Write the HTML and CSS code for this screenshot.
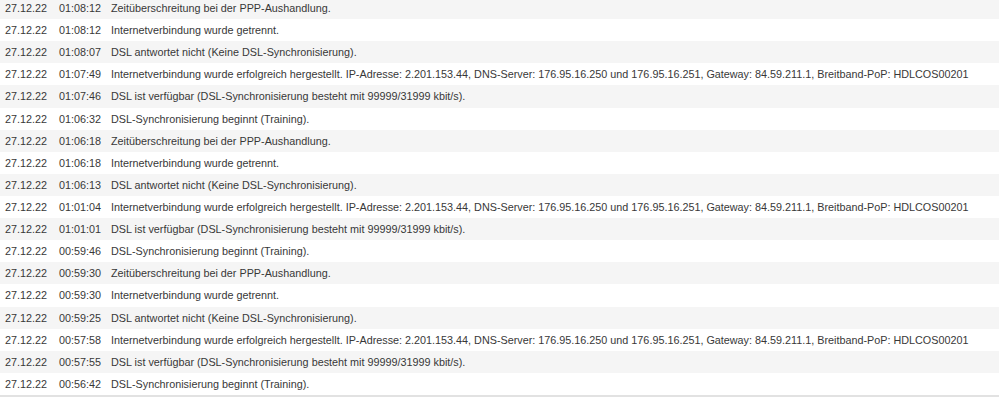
FILE: index.html
```html
<!DOCTYPE html>
<html>
<head>
<meta charset="utf-8">
<link rel="stylesheet" href="styles.css">
</head>
<body>
<div class="log">
  <div class="row"><span class="d">27.12.22</span><span class="t">01:08:12</span><span class="m">Zeitüberschreitung bei der PPP-Aushandlung.</span></div>
  <div class="row"><span class="d">27.12.22</span><span class="t">01:08:12</span><span class="m">Internetverbindung wurde getrennt.</span></div>
  <div class="row"><span class="d">27.12.22</span><span class="t">01:08:07</span><span class="m">DSL antwortet nicht (Keine DSL-Synchronisierung).</span></div>
  <div class="row"><span class="d">27.12.22</span><span class="t">01:07:49</span><span class="m">Internetverbindung wurde erfolgreich hergestellt. IP-Adresse: 2.201.153.44, DNS-Server: 176.95.16.250 und 176.95.16.251, Gateway: 84.59.211.1, Breitband-PoP: HDLCOS00201</span></div>
  <div class="row"><span class="d">27.12.22</span><span class="t">01:07:46</span><span class="m">DSL ist verfügbar (DSL-Synchronisierung besteht mit 99999/31999 kbit/s).</span></div>
  <div class="row"><span class="d">27.12.22</span><span class="t">01:06:32</span><span class="m">DSL-Synchronisierung beginnt (Training).</span></div>
  <div class="row"><span class="d">27.12.22</span><span class="t">01:06:18</span><span class="m">Zeitüberschreitung bei der PPP-Aushandlung.</span></div>
  <div class="row"><span class="d">27.12.22</span><span class="t">01:06:18</span><span class="m">Internetverbindung wurde getrennt.</span></div>
  <div class="row"><span class="d">27.12.22</span><span class="t">01:06:13</span><span class="m">DSL antwortet nicht (Keine DSL-Synchronisierung).</span></div>
  <div class="row"><span class="d">27.12.22</span><span class="t">01:01:04</span><span class="m">Internetverbindung wurde erfolgreich hergestellt. IP-Adresse: 2.201.153.44, DNS-Server: 176.95.16.250 und 176.95.16.251, Gateway: 84.59.211.1, Breitband-PoP: HDLCOS00201</span></div>
  <div class="row"><span class="d">27.12.22</span><span class="t">01:01:01</span><span class="m">DSL ist verfügbar (DSL-Synchronisierung besteht mit 99999/31999 kbit/s).</span></div>
  <div class="row"><span class="d">27.12.22</span><span class="t">00:59:46</span><span class="m">DSL-Synchronisierung beginnt (Training).</span></div>
  <div class="row"><span class="d">27.12.22</span><span class="t">00:59:30</span><span class="m">Zeitüberschreitung bei der PPP-Aushandlung.</span></div>
  <div class="row"><span class="d">27.12.22</span><span class="t">00:59:30</span><span class="m">Internetverbindung wurde getrennt.</span></div>
  <div class="row"><span class="d">27.12.22</span><span class="t">00:59:25</span><span class="m">DSL antwortet nicht (Keine DSL-Synchronisierung).</span></div>
  <div class="row"><span class="d">27.12.22</span><span class="t">00:57:58</span><span class="m">Internetverbindung wurde erfolgreich hergestellt. IP-Adresse: 2.201.153.44, DNS-Server: 176.95.16.250 und 176.95.16.251, Gateway: 84.59.211.1, Breitband-PoP: HDLCOS00201</span></div>
  <div class="row"><span class="d">27.12.22</span><span class="t">00:57:55</span><span class="m">DSL ist verfügbar (DSL-Synchronisierung besteht mit 99999/31999 kbit/s).</span></div>
  <div class="row"><span class="d">27.12.22</span><span class="t">00:56:42</span><span class="m">DSL-Synchronisierung beginnt (Training).</span></div>
</div>
</body>
</html>
```
FILE: styles.css
```css
html, body {
  margin: 0;
  padding: 0;
  background: #ffffff;
  overflow: hidden;
}
body {
  font-family: "Liberation Sans", Arial, sans-serif;
  font-size: 10.8px;
  color: #383838;
}
.log {
  margin-top: -3px;
  border-bottom: 2px solid #e2e2e2;
}
.row {
  display: grid;
  grid-template-columns: 54px 52px 1fr;
  height: 22.12px;
  align-items: center;
  padding-left: 5px;
  white-space: nowrap;
}
.row:nth-child(odd) {
  background: #f5f5f5;
}
```
